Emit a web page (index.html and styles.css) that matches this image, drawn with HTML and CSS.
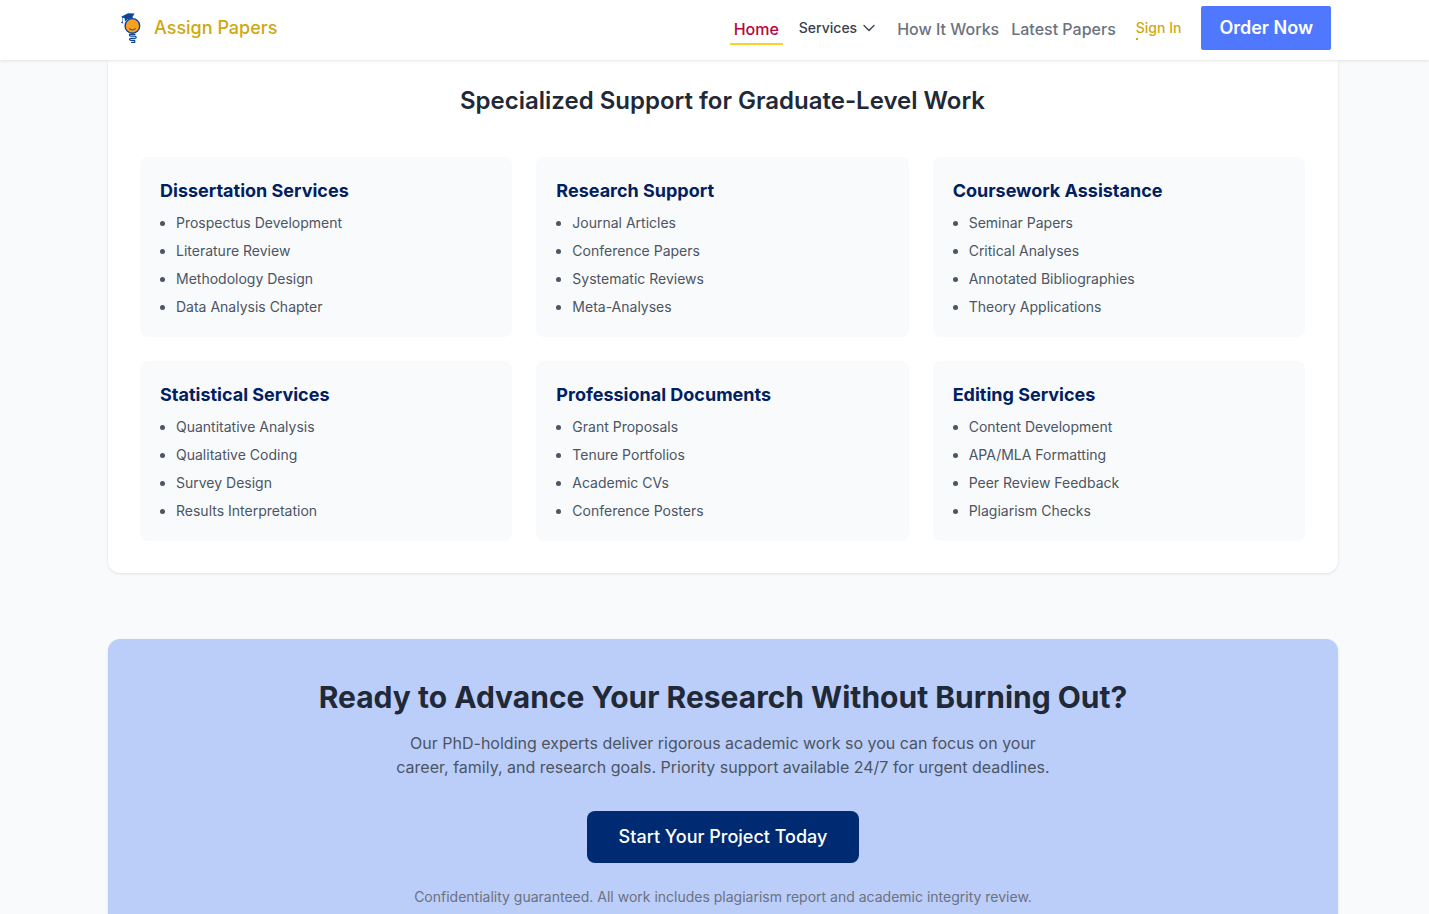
FILE: index.html
```html
<!DOCTYPE html>
<html lang="en">
<head>
<meta charset="utf-8">
<meta name="viewport" content="width=device-width, initial-scale=1">
<title>Assign Papers</title>
<link rel="stylesheet" href="styles.css">
</head>
<body>
<header class="site-header">
  <a class="brand" href="#">
    <svg class="brand-logo" viewBox="0 0 24 32" aria-hidden="true">
      <circle cx="12.4" cy="13.9" r="7.3" fill="#f9a11f" stroke="#0d459b" stroke-width="1.4"/>
      <path d="M9 16.600q3.400 3 6.800 0" fill="none" stroke="#0d459b" stroke-width=".9"/>
      <path d="M1.200 4.800 8 1.200l6.600.3-2 3.300.2 1.800Q8.300 5.700 4.900 9.500L4.700 6.300 2.600 5.700v3.800l.8 2-2.300-.5 1-1.800V5.500z" fill="#0d459b"/>
      <path d="M9.500 22.700c0 1.800.3 1.400 5.200 1.400 2 0 2 2.200 0 2.200h-3.700c-2 0-2 2 0 2h3.700M10 22.300h5M11.500 30.300h3.200v-1.800" fill="none" stroke="#0d459b" stroke-width="1.200" stroke-linecap="round"/>
    </svg>
    <span>Assign Papers</span>
  </a>
  <nav class="main-nav" aria-label="Main">
    <a class="nav-link nav-link-active" href="#">Home</a>
    <button class="nav-menu" type="button">Services
      <svg class="chevron" viewBox="0 0 16 16" aria-hidden="true"><path d="M3 5.500 8 10.500 13 5.500"/></svg>
    </button>
    <a class="nav-link" href="#">How It Works</a>
    <a class="nav-link" href="#">Latest Papers</a>
    <a class="sign-in" href="#">Sign In</a>
    <a class="order" href="#">Order Now</a>
  </nav>
</header>
<main class="page">
  <section class="support">
    <h2 class="support-title">Specialized Support for Graduate-Level Work</h2>
    <div class="cards">
      <article class="card"><h3>Dissertation Services</h3>
        <ul><li>Prospectus Development</li><li>Literature Review</li><li>Methodology Design</li><li>Data Analysis Chapter</li></ul></article>
      <article class="card"><h3>Research Support</h3>
        <ul><li>Journal Articles</li><li>Conference Papers</li><li>Systematic Reviews</li><li>Meta-Analyses</li></ul></article>
      <article class="card"><h3>Coursework Assistance</h3>
        <ul><li>Seminar Papers</li><li>Critical Analyses</li><li>Annotated Bibliographies</li><li>Theory Applications</li></ul></article>
      <article class="card"><h3>Statistical Services</h3>
        <ul><li>Quantitative Analysis</li><li>Qualitative Coding</li><li>Survey Design</li><li>Results Interpretation</li></ul></article>
      <article class="card"><h3>Professional Documents</h3>
        <ul><li>Grant Proposals</li><li>Tenure Portfolios</li><li>Academic CVs</li><li>Conference Posters</li></ul></article>
      <article class="card"><h3>Editing Services</h3>
        <ul><li>Content Development</li><li>APA/MLA Formatting</li><li>Peer Review Feedback</li><li>Plagiarism Checks</li></ul></article>
    </div>
  </section>
  <section class="cta">
    <h2 class="cta-title">Ready to Advance Your Research Without Burning Out?</h2>
    <p class="cta-text">Our PhD-holding experts deliver rigorous academic work so you can focus on your career, family, and research goals. Priority support available 24/7 for urgent deadlines.</p>
    <a class="cta-button" href="#">Start Your Project Today</a>
    <p class="cta-note">Confidentiality guaranteed. All work includes plagiarism report and academic integrity review.</p>
  </section>
</main>
</body>
</html>
```
FILE: styles.css
```css
* {
  box-sizing: border-box;
}

html {
  scrollbar-width: none;
}

body {
  margin: 0;
  background: #f9fafc;
  color: #1f2937;
  font-family: Inter, "Liberation Sans", sans-serif;
  font-size: 16px;
  line-height: 24px;
}

h2, h3, p, ul {
  margin: 0;
}

a {
  color: inherit;
  text-decoration: none;
}

.site-header {
  position: sticky;
  top: 0;
  z-index: 1;
  display: flex;
  align-items: center;
  justify-content: space-between;
  height: 60px;
  padding: 0 98px 4px 120px;
  background: #fff;
  box-shadow: 0 1px 3px rgba(0, 0, 0, 0.1);
}

.brand {
  display: flex;
  align-items: center;
  gap: 10px;
  color: #cfa710;
  font-size: 18px;
  font-weight: 500;
}

.brand-logo {
  width: 24px;
  height: 32px;
}

.main-nav {
  display: flex;
  align-items: center;
  font-weight: 500;
}

.nav-link {
  margin-left: 4px;
  padding: 6px 4px 2px;
  border-bottom: 2px solid transparent;
  color: #6b7280;
}

.nav-link-active {
  border-color: #fcd12f;
  color: #b8053d;
}

.nav-menu {
  display: flex;
  align-items: center;
  gap: 4px;
  margin: 0 12px 0 16px;
  padding: 0;
  border: 0;
  background: none;
  color: #374151;
  font: inherit;
  font-size: 14px;
}

.chevron {
  width: 16px;
  height: 16px;
  fill: none;
  stroke: currentColor;
  stroke-width: 1.3;
  stroke-linecap: round;
  stroke-linejoin: round;
}

.sign-in {
  margin: 0 20px 0 16px;
  color: #cfa710;
  font-size: 14px;
}

.sign-in::after {
  content: "";
  display: block;
  width: 2px;
  height: 2px;
  margin-top: -2px;
  background: currentColor;
}

.order {
  padding: 8px 18px;
  border-radius: 2px;
  background: #4f78ff;
  color: #fff;
  font-size: 18px;
  font-weight: 600;
  line-height: 28px;
}

.page {
  padding: 0 91px 0 108px;
}

.support {
  padding: 25px 33px 32px 32px;
  border-radius: 0 0 12px 12px;
  background: #fff;
  box-shadow: 0 1px 3px rgba(0, 0, 0, 0.1);
}

.support-title {
  margin-bottom: 40px;
  font-size: 24px;
  font-weight: 600;
  line-height: 32px;
  text-align: center;
}

.cards {
  display: grid;
  grid-template-columns: repeat(3, 1fr);
  gap: 24px;
}

.card {
  padding: 20px;
  border-radius: 8px;
  background: #f9fafc;
}

.card h3 {
  margin-bottom: 8px;
  color: #00205f;
  font-size: 18px;
  font-weight: 700;
  line-height: 28px;
}

.card ul {
  display: grid;
  gap: 8px;
  padding-left: 16px;
  color: #4b5563;
  font-size: 14px;
  line-height: 20px;
}

.cta {
  display: flex;
  flex-direction: column;
  align-items: center;
  margin-top: 66px;
  padding: 40px 32px;
  border-radius: 12px;
  background: #bbcdf9;
  box-shadow: 0 1px 3px rgba(0, 0, 0, 0.1);
  text-align: center;
}

.cta-title {
  margin-bottom: 16px;
  font-size: 30px;
  font-weight: 700;
  line-height: 36px;
}

.cta-text {
  max-width: 672px;
  margin-bottom: 32px;
  color: #4b5563;
}

.cta-button {
  margin-bottom: 24px;
  padding: 12px 32px;
  border-radius: 8px;
  background: #002b72;
  color: #fff;
  font-size: 18px;
  font-weight: 500;
  line-height: 28px;
}

.cta-note {
  color: #6b7280;
  font-size: 14px;
  line-height: 20px;
}
```
